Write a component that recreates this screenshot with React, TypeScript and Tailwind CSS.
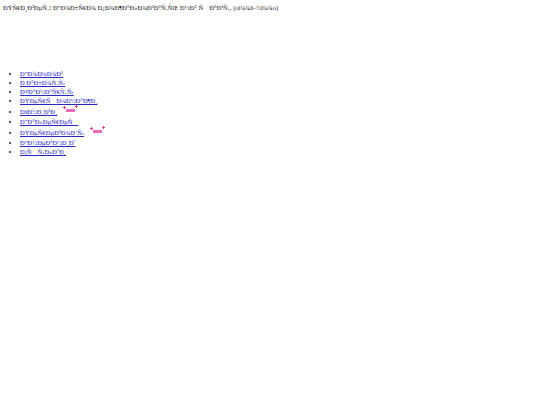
import React from "react";

// старая страница, сохранённая в utf-8, но открытая как windows-1252
const garble = (s: string) =>
  new TextDecoder("windows-1252").decode(new TextEncoder().encode(s));

const links = [
  { title: "Домой" },
  { title: "Работы" },
  { title: "Фанарты" },
  { title: "Персонажи" },
  { title: "Книги", isNew: true },
  { title: "Галерея" },
  { title: "Переводы", isNew: true },
  { title: "Дневник" },
  { title: "Ссылки" },
];

function Sparkle({ className }: { className: string }) {
  return (
    <svg width="3" height="3" viewBox="0 0 3 3" className={`absolute ${className}`}>
      <path d="M1 0h1v3H1zM0 1h3v1H0z" fill="#e0409a" />
    </svg>
  );
}

function NewBadge() {
  return (
    <span className="relative inline-block ml-[6px] w-[15px] h-0">
      <Sparkle className="left-0 top-[-8px]" />
      <span className="absolute left-[3px] top-[-5px] w-[9px] h-[3px] bg-[#f06bb5]" />
      <Sparkle className="right-0 top-[-9px]" />
    </span>
  );
}

export default function App() {
  return (
    <div className="w-[540px] h-[405px] bg-white text-[6.5px] leading-[9px] text-[#222] font-['Liberation_Serif',serif]">
      <p className="px-[3px] pt-[3px]">{garble("Привет! Добро пожаловать на сайт, (o＾▽＾o)")}</p>

      <ul className="list-disc pl-[20px] pt-[57px]">
        {links.map((link) => (
          <li key={link.title} className={link.isNew ? "pt-[2px] pb-[1px]" : ""}>
            <a href="#" className="text-[#2727c4] underline">
              {garble(link.title)}
            </a>
            {link.isNew && <NewBadge />}
          </li>
        ))}
      </ul>
    </div>
  );
}
